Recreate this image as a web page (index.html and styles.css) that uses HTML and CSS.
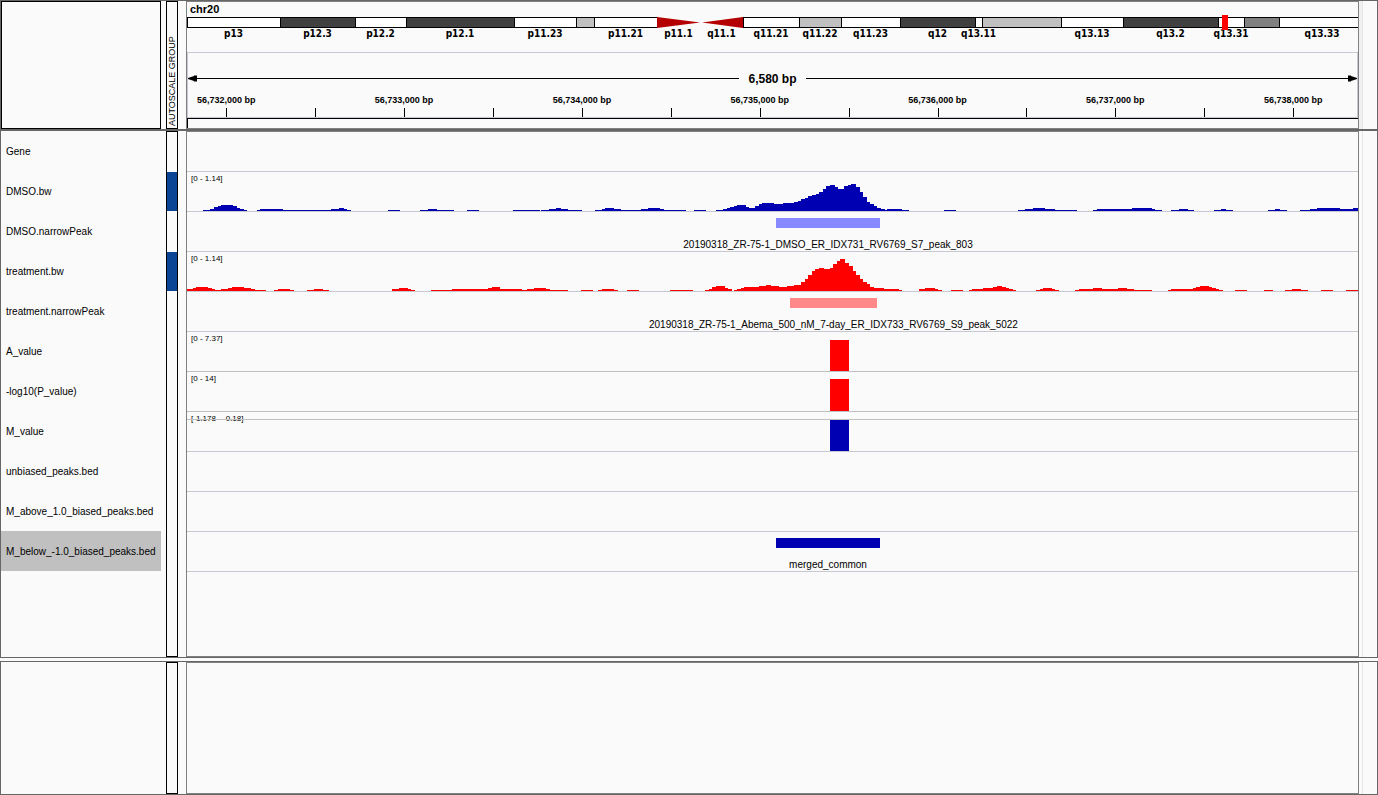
FILE: index.html
```html
<!DOCTYPE html>
<html lang="en">

<head>
    <meta charset="UTF-8">
    <meta name="viewport" content="width=device-width, initial-scale=1.0">
    <title>chr20</title>
    <link rel="stylesheet" href="styles.css">
</head>

<body>
    <header class="panel header-panel">
        <div class="names names-box"></div>
        <div class="attributes"><span class="attribute-title">AUTOSCALE GROUP</span></div>
        <div class="plot">
            <h1 class="chromosome">chr20</h1>
            <div class="ideogram">
                <div class="bands" id="bands"></div>
                <div class="band-labels" id="bandLabels"></div>
                <div class="locus"></div>
            </div>
            <div class="ruler">
                <div class="span-row">
                    <svg class="arrow" viewBox="0 0 10 7"><path d="M0 3L6 1V0.5H9V3H10V4H9V6.5H6V6L0 4Z"/></svg>
                    <div class="line"></div>
                    <span class="span-text">6,580 bp</span>
                    <div class="line"></div>
                    <svg class="arrow" viewBox="0 0 10 7"><path d="M10 3L4 1V0.5H1V3H0V4H1V6.5H4V6L10 4Z"/></svg>
                </div>
                <div class="ticks" id="ticks"></div>
            </div>
            <div class="sequence"></div>
        </div>
        <div class="gutter"></div>
    </header>

    <main class="panel tracks-panel">
        <div class="names">
            <div class="name">Gene</div>
            <div class="name">DMSO.bw</div>
            <div class="name">DMSO.narrowPeak</div>
            <div class="name">treatment.bw</div>
            <div class="name">treatment.narrowPeak</div>
            <div class="name">A_value</div>
            <div class="name">-log10(P_value)</div>
            <div class="name">M_value</div>
            <div class="name">unbiased_peaks.bed</div>
            <div class="name">M_above_1.0_biased_peaks.bed</div>
            <div class="name selected">M_below_-1.0_biased_peaks.bed</div>
        </div>
        <div class="attributes">
            <div class="group"></div>
            <div class="group grouped"></div>
            <div class="group"></div>
            <div class="group grouped"></div>
        </div>
        <div class="plot">
            <div class="track"></div>
            <div class="track">
                <span class="range">[0 - 1.14]</span>
                <svg class="signal" viewBox="0 0 1171 39" preserveAspectRatio="none"><path class="blue" id="dmso"/></svg>
            </div>
            <div class="track">
                <div class="feature light-blue" data-start="56735089" data-end="56735673"></div>
                <span class="feature-label" data-start="56735089" data-end="56735673">20190318_ZR-75-1_DMSO_ER_IDX731_RV6769_S7_peak_803</span>
            </div>
            <div class="track">
                <span class="range">[0 - 1.14]</span>
                <svg class="signal" viewBox="0 0 1171 39" preserveAspectRatio="none"><path class="red" id="treatment"/></svg>
            </div>
            <div class="track">
                <div class="feature light-red" data-start="56735167" data-end="56735656"></div>
                <span class="feature-label" data-start="56735167" data-end="56735656">20190318_ZR-75-1_Abema_500_nM_7-day_ER_IDX733_RV6769_S9_peak_5022</span>
            </div>
            <div class="track value-track">
                <span class="range">[0 - 7.37]</span>
                <div class="value red" data-start="56735392" data-end="56735499"></div>
            </div>
            <div class="track value-track">
                <span class="range">[0 - 14]</span>
                <div class="value value-full red" data-start="56735392" data-end="56735499"></div>
            </div>
            <div class="track">
                <span class="range">[-1.178 - -0.18]</span>
                <div class="zero-line"></div>
                <div class="value blue" data-start="56735392" data-end="56735499"></div>
            </div>
            <div class="track"></div>
            <div class="track"></div>
            <div class="track">
                <div class="feature blue" data-start="56735089" data-end="56735673"></div>
                <span class="feature-label" data-start="56735089" data-end="56735673">merged_common</span>
            </div>
        </div>
        <div class="gutter"></div>
    </main>

    <section class="panel feature-panel">
        <div class="names"></div>
        <div class="attributes"></div>
        <div class="plot"></div>
        <div class="gutter"></div>
    </section>

    <script src="script.js"></script>
</body>

</html>
```

FILE: styles.css
```css
* {
    box-sizing: border-box;
}

body {
    display: flex;
    flex-direction: column;
    min-height: 100vh;
    margin: 0;
    background-color: #fafafa;
    color: black;
    font-family: "Liberation Sans", Arial, sans-serif;
    font-size: 10px;
}

.panel {
    display: grid;
    grid-template-columns: 165px 20px minmax(0, 1fr) 18px;
    border: 1px solid #666;
}

.header-panel {
    grid-template-rows: minmax(0, 1fr);
    height: 130px;
}

.tracks-panel {
    flex: 1;
}

.feature-panel {
    height: 134px;
    margin-top: 3px;
}

/* left columns */
.names {
    width: 160px;
}

.names-box {
    border: 1px solid black;
}

.name {
    height: 40px;
    padding-left: 5px;
    line-height: 42px;
    white-space: nowrap;
    overflow: hidden;
}

.selected {
    background-color: #c0c0c0;
}

.attributes {
    width: 12px;
    border: 1px solid black;
}

.attribute-title {
    display: block;
    height: 100%;
    padding-top: 2px;
    line-height: 10px;
    font-size: 9px;
    white-space: nowrap;
    writing-mode: vertical-rl;
    transform: rotate(180deg);
}

.group {
    height: 39px;
    margin-bottom: 1px;
}

.grouped {
    background-color: #0a4595;
}

.plot {
    position: relative;
    border: 1px solid #808080;
}

.gutter {
    width: 4px;
    border-right: 1px solid #e6e6e6;
}

.header-panel .gutter {
    background-color: #f0f0f0;
}

/* ideogram */
.header-panel .plot {
    display: flex;
    flex-direction: column;
}

.chromosome {
    height: 15px;
    margin: 0;
    padding-left: 3px;
    line-height: 15px;
    font-size: 11px;
}

.ideogram {
    position: relative;
    height: 35px;
}

.bands,
.band-labels {
    display: flex;
    overflow: hidden;
}

.band {
    flex: none;
    height: 11px;
    border: 1px solid black;
    border-right: none;
    background-color: white;
}

.band-dark {
    background-color: #404040;
}

.band-mid {
    background-color: #808080;
}

.band-light {
    background-color: #c0c0c0;
}

.band-cen-left,
.band-cen-right {
    border: none;
    background-color: #b40000;
}

.band-cen-left {
    clip-path: polygon(0 0, 100% 50%, 0 100%);
}

.band-cen-right {
    clip-path: polygon(100% 0, 5% 50%, 100% 100%);
}

.band-label {
    display: flex;
    flex: none;
    justify-content: center;
    line-height: 12px;
    font-family: "DejaVu Sans Condensed", "DejaVu Sans", sans-serif;
    font-weight: bold;
    font-size: 10px;
    white-space: nowrap;
}

.locus {
    position: absolute;
    top: -2px;
    left: 88.4%;
    width: 6px;
    height: 15px;
    background-color: red;
}

/* ruler */
.ruler {
    display: flex;
    flex-direction: column;
    height: 66px;
    border: 1px solid #c8c8d4;
}

.span-row {
    display: flex;
    align-items: center;
    height: 15px;
    margin-top: 18px;
}

.arrow {
    width: 10px;
    height: 7px;
}

.line {
    flex: 1;
    height: 1px;
    background-color: black;
}

.span-text {
    padding: 0 9px;
    font-size: 12px;
    font-weight: bold;
}

.ticks {
    position: relative;
    flex: 1;
    margin-left: -1px;
}

.tick {
    position: absolute;
    bottom: 0;
    width: 1px;
    height: 9px;
    background-color: black;
}

.tick-label {
    position: absolute;
    bottom: 12px;
    line-height: 10px;
    font-size: 9px;
    font-weight: bold;
    white-space: nowrap;
    transform: translateX(-50%);
}

.sequence {
    flex: 1;
    border-top: 1px solid black;
    border-left: 1px solid black;
}

/* tracks */
.track {
    position: relative;
    height: 40px;
    border-bottom: 1px solid #c8c8d0;
}

.value-track {
    border-bottom-color: #c0c0c0;
}

.range {
    position: absolute;
    top: 2px;
    left: 4px;
    line-height: 10px;
    font-size: 8px;
}

.signal {
    display: block;
    width: 100%;
    height: 39px;
}

.feature {
    position: absolute;
    top: 6px;
    height: 10px;
}

.feature-label {
    position: absolute;
    top: 26px;
    line-height: 13px;
    white-space: nowrap;
    transform: translateX(-50%);
}

.value {
    position: absolute;
    top: 8px;
    bottom: 0;
}

.value-full {
    top: 7px;
}

.zero-line {
    position: absolute;
    top: 7px;
    width: 100%;
    height: 1px;
    background-color: #c0c0c0;
}

.red {
    background-color: red;
    fill: red;
}

.blue {
    background-color: #0000b2;
    fill: #0000b2;
}

.light-red {
    background-color: #ff8888;
}

.light-blue {
    background-color: #8888ff;
}
```

FILE: script.js
```js
const VIEW_START = 56731779;
const VIEW_LENGTH = 6580;
const WIDTH = 1171;

// name, width, stain
const bands = [
    ["p13", 93, ""], ["p12.3", 75, "dark"], ["p12.2", 51, ""], ["p12.1", 108, "dark"],
    ["p11.23", 62, ""], ["", 18, "light"], ["p11.21", 63, ""],
    ["p11.1", 43, "cen-left"], ["q11.1", 43, "cen-right"],
    ["q11.21", 56, ""], ["q11.22", 42, "light"], ["q11.23", 59, ""], ["q12", 75, "dark"],
    ["q13.11", 7, ""], ["", 79, "light"], ["q13.13", 62, ""], ["q13.2", 95, "dark"],
    ["q13.31", 26, ""], ["", 35, "mid"], ["q13.33", 86, ""]
];

// x, height of each step
const dmso = [
    [16, 1], [23, 2], [27, 4], [31, 5], [34, 6], [46, 5], [50, 3], [53, 2], [57, 1], [60, 0],
    [70, 1], [73, 2], [96, 1], [144, 2], [152, 3], [157, 2], [160, 1], [164, 0],
    [201, 1], [213, 0], [233, 1], [241, 2], [250, 1], [267, 0], [280, 1], [292, 0],
    [326, 1], [353, 0], [354, 1], [362, 2], [369, 3], [374, 2], [381, 1], [395, 0],
    [408, 1], [415, 2], [418, 3], [427, 2], [434, 1], [454, 2], [461, 3], [473, 2], [477, 1], [499, 0],
    [507, 1], [519, 0], [529, 1], [536, 2], [540, 3], [543, 4], [547, 5], [550, 6], [559, 4], [562, 3],
    [568, 5], [572, 7], [575, 8], [587, 7], [596, 8], [607, 9], [611, 10], [614, 12], [618, 13],
    [621, 15], [625, 16], [629, 17], [632, 19], [636, 22], [639, 25], [643, 26], [648, 24], [651, 22],
    [657, 25], [661, 26], [664, 27], [669, 24], [673, 19], [676, 14], [680, 9], [683, 7], [687, 5],
    [690, 3], [694, 2], [698, 1], [700, 2], [715, 1], [722, 0], [757, 1], [769, 0],
    [831, 1], [838, 2], [846, 3], [858, 2], [868, 1], [890, 0],
    [906, 1], [910, 2], [945, 3], [965, 2], [968, 1], [975, 0], [984, 1], [992, 2], [1001, 1], [1007, 0],
    [1027, 1], [1034, 2], [1039, 1], [1046, 0], [1081, 1], [1088, 2], [1093, 1], [1100, 0],
    [1113, 1], [1123, 2], [1130, 3], [1153, 2], [1166, 3]
];

const treatment = [
    [0, 2], [6, 3], [9, 4], [21, 3], [25, 2], [28, 1], [34, 2], [41, 3], [45, 4], [57, 3], [64, 2], [68, 1], [79, 0],
    [87, 1], [91, 2], [103, 1], [107, 0], [120, 1], [127, 2], [136, 1], [142, 0],
    [205, 2], [212, 3], [221, 2], [224, 1], [228, 0],
    [244, 1], [265, 2], [301, 3], [305, 4], [313, 2], [335, 1], [340, 2], [347, 3], [359, 2], [363, 1], [381, 0],
    [394, 1], [406, 0], [411, 1], [415, 2], [427, 1], [431, 0], [440, 1], [452, 0], [483, 1], [506, 0],
    [518, 1], [522, 2], [525, 4], [529, 5], [538, 3], [541, 2], [545, 0],
    [547, 1], [550, 2], [554, 3], [557, 4], [572, 5], [579, 6], [584, 5], [592, 4], [600, 5], [607, 6],
    [614, 9], [618, 12], [621, 16], [625, 20], [628, 22], [632, 23], [637, 22], [643, 23], [646, 27],
    [650, 30], [653, 32], [658, 28], [662, 25], [666, 20], [669, 16], [673, 12], [676, 9], [680, 7],
    [683, 4], [687, 3], [697, 2], [712, 1], [715, 0],
    [732, 2], [738, 3], [748, 2], [751, 1], [755, 0], [764, 1], [776, 0],
    [782, 1], [785, 2], [796, 3], [806, 4], [810, 5], [815, 4], [819, 3], [822, 2], [826, 1], [829, 0],
    [849, 1], [853, 2], [856, 3], [865, 2], [868, 1], [872, 0],
    [888, 1], [892, 2], [906, 3], [915, 2], [931, 3], [940, 2], [947, 1], [965, 0],
    [981, 1], [984, 2], [1006, 3], [1009, 4], [1013, 5], [1022, 4], [1025, 3], [1029, 2], [1032, 1], [1036, 0],
    [1048, 1], [1060, 0], [1077, 1], [1086, 0], [1098, 1], [1105, 2], [1114, 1], [1121, 0],
    [1134, 1], [1146, 0], [1159, 1]
];

function percent(position) {
    return (position - VIEW_START) / VIEW_LENGTH * 100;
}

function addElement(parent, className, text) {
    const element = document.createElement("div");
    element.className = className;
    element.textContent = text;
    parent.appendChild(element);
    return element;
}

function drawBands() {
    const bar = document.getElementById("bands");
    const labels = document.getElementById("bandLabels");

    bands.forEach(([name, width, stain]) => {
        const size = width / WIDTH * 100 + "%";
        addElement(bar, stain ? "band band-" + stain : "band", "").style.width = size;
        addElement(labels, "band-label", name).style.width = size;
    });
}

function drawTicks() {
    const ticks = document.getElementById("ticks");

    for (let position = 56732000; position <= 56738000; position += 500) {
        addElement(ticks, "tick", "").style.left = percent(position) + "%";
        if (position % 1000 === 0) {
            const label = addElement(ticks, "tick-label", position.toLocaleString("en-US") + " bp");
            label.style.left = percent(position) + "%";
        }
    }
}

function drawSignal(id, steps) {
    let path = "M0 39";
    steps.forEach(([x, height]) => {
        path += "H" + x + "V" + (39 - height);
    });
    document.getElementById(id).setAttribute("d", path + "H" + WIDTH + "V39Z");
}

function placeFeatures() {
    document.querySelectorAll("[data-start]").forEach(element => {
        const start = percent(Number(element.dataset.start));
        const end = percent(Number(element.dataset.end));

        if (element.classList.contains("feature-label")) {
            element.style.left = (start + end) / 2 + "%";
        } else {
            element.style.left = start + "%";
            element.style.width = end - start + "%";
        }
    });
}

drawBands();
drawTicks();
drawSignal("dmso", dmso);
drawSignal("treatment", treatment);
placeFeatures();
```
